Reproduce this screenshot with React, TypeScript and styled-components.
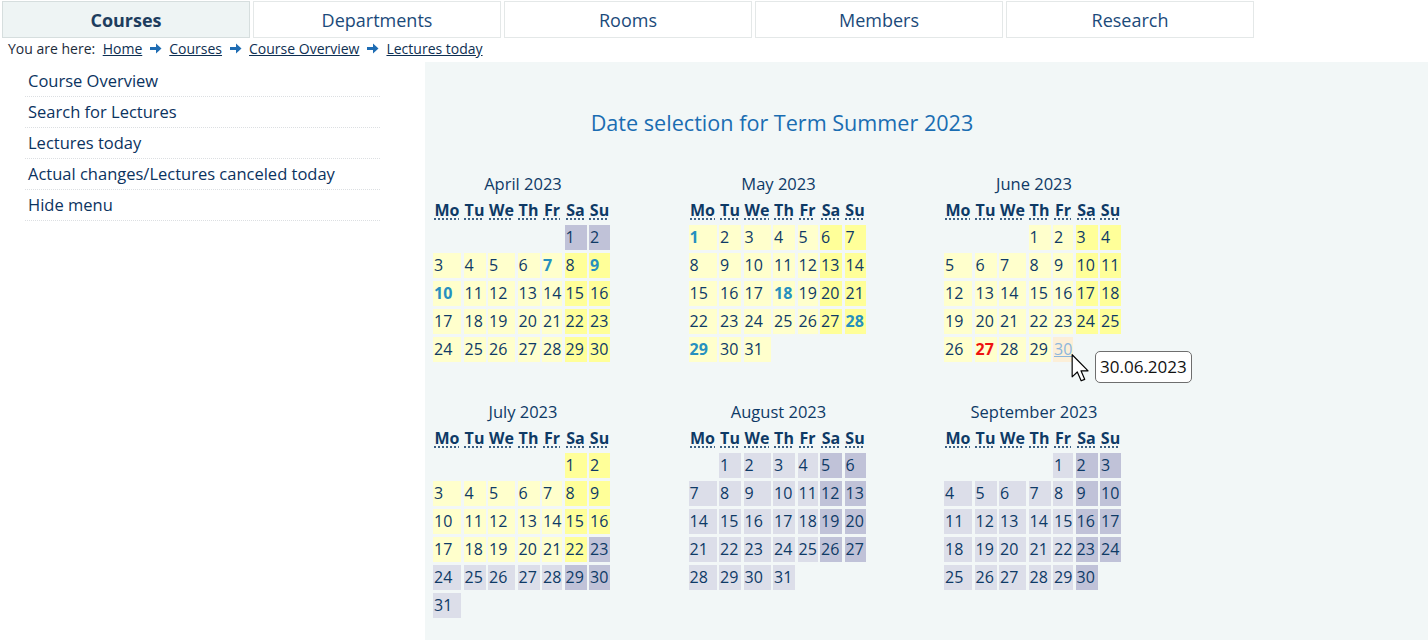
import React from 'react';
import styled, { createGlobalStyle, css } from 'styled-components';

const GlobalStyle = createGlobalStyle`
  html, body {
    margin: 0;
    padding: 0;
    background: #fff;
  }
  body {
    font-family: 'Open Sans', 'Noto Sans', sans-serif;
    color: #0e3a66;
  }
`;

// Top navigation
const Nav = styled.nav`
  display: flex;
  gap: 3px;
  padding: 1px 0 0 2px;
`;

const Tab = styled.a<{ $active?: boolean }>`
  box-sizing: border-box;
  width: 248px;
  height: 37px;
  display: flex;
  align-items: center;
  justify-content: center;
  border: 1px solid #e4e8e8;
  background: #fff;
  font-size: 18px;
  color: #1b4a7a;
  text-decoration: none;
  ${p => p.$active && css`
    background: #eef4f4;
    border-color: #d6dede;
    font-weight: 700;
    color: #1d3d5e;
  `}
`;

const Crumbs = styled.div`
  box-sizing: border-box;
  height: 24px;
  padding: 0 0 3px 8px;
  display: flex;
  align-items: center;
  gap: 7.5px;
  font-size: 14px;
  color: #1c2b3a;
`;

const CrumbLink = styled.a`
  color: #0e2f52;
  text-decoration: underline;
`;

const Arrow = () => (
  <svg width="12" height="11" viewBox="0 0 12 11">
    <path d="M0 4 H6 V0.5 L11.5 5.5 L6 10.5 V7 H0 Z" fill="#1e6cb3" />
  </svg>
);

// Body layout
const Body = styled.div`
  display: flex;
  min-height: calc(100vh - 62px);
`;

const Sidebar = styled.ul`
  width: 425px;
  flex-shrink: 0;
  margin: 0;
  padding: 4px 0 0 25px;
  box-sizing: border-box;
  list-style: none;
`;

const SideItem = styled.li`
  width: 352px;
  height: 30px;
  line-height: 30px;
  padding-left: 3px;
  box-sizing: content-box;
  border-bottom: 1px dotted #dcdfe2;
  font-size: 16.5px;
  color: #0b3360;
`;

const Main = styled.main`
  flex: 1;
  background: #f2f7f7;
  padding: 46px 0 16px 8px;
`;

const Wrapper = styled.div`
  width: 698px;
`;

const Title = styled.h1`
  margin: 0 0 34px;
  text-align: center;
  font-size: 21.6px;
  line-height: 30px;
  font-weight: 400;
  color: #1a6db2;
`;

const Months = styled.div`
  display: grid;
  grid-template-columns: repeat(3, 180px);
  column-gap: 75.5px;
  row-gap: 38px;
  align-items: start;
`;

const MonthBox = styled.section`
  display: flex;
  flex-direction: column;
`;

const MonthName = styled.div`
  text-align: center;
  font-size: 16.5px;
  line-height: 24px;
  height: 27px;
  color: #0e3a66;
`;

const DayGrid = styled.div`
  display: grid;
  grid-template-columns: 28px 22px 27px 22px 20px 22px 21px;
  column-gap: 2.5px;
  row-gap: 3px;
`;

const WeekHead = styled.abbr`
  height: 22px;
  line-height: 22px;
  text-align: center;
  font-size: 16px;
  font-weight: 700;
  color: #0e3a66;
  text-decoration: underline dotted;
  text-underline-offset: 3px;
  white-space: nowrap;
  margin-bottom: 1px;
`;

type Tone = 'lecture' | 'free';
type Mark = 'holiday' | 'today' | 'hover' | undefined;

const tones = {
  lecture: ['#ffffcc', '#ffff99'],
  free: ['#dcdee9', '#c0c2d8'],
};

const Day = styled.div<{ $tone: Tone; $weekend: boolean; $mark: Mark }>`
  position: relative;
  height: 25px;
  line-height: 25px;
  padding-left: 1px;
  font-size: 16px;
  white-space: nowrap;
  color: #0e3a66;
  background: ${p => tones[p.$tone][p.$weekend ? 1 : 0]};
  ${p => p.$mark === 'holiday' && css`
    color: #2690bf;
    font-weight: 700;
  `}
  ${p => p.$mark === 'today' && css`
    color: #ee1111;
    font-weight: 700;
  `}
  ${p => p.$mark === 'hover' && css`
    background: #fcefd8;
    color: #8cb6dc;
    text-decoration: underline;
  `}
`;

const Tooltip = styled.div`
  position: absolute;
  left: 42px;
  top: 14px;
  z-index: 3;
  padding: 0 4px;
  height: 30px;
  line-height: 30px;
  background: #fff;
  border: 1px solid #6e6e6e;
  border-radius: 5px;
  color: #111;
  font-size: 17px;
  font-weight: 400;
  text-decoration: none;
`;

const Cursor = styled.svg`
  position: absolute;
  left: 18px;
  top: 17px;
  z-index: 4;
`;

const months = [
  { name: 'April 2023', m: 4, offset: 5, days: 30 },
  { name: 'May 2023', m: 5, offset: 0, days: 31 },
  { name: 'June 2023', m: 6, offset: 3, days: 30 },
  { name: 'July 2023', m: 7, offset: 5, days: 31 },
  { name: 'August 2023', m: 8, offset: 1, days: 31 },
  { name: 'September 2023', m: 9, offset: 4, days: 30 },
];

const weekdays = [
  ['Mo', 'Monday'], ['Tu', 'Tuesday'], ['We', 'Wednesday'], ['Th', 'Thursday'],
  ['Fr', 'Friday'], ['Sa', 'Saturday'], ['Su', 'Sunday'],
];

const holidays = ['4-7', '4-9', '4-10', '5-1', '5-18', '5-28', '5-29'];

const inLectures = (m: number, d: number) => {
  const v = m * 100 + d;
  return v >= 403 && v <= 722;
};

const Month: React.FC<{ name: string; m: number; offset: number; days: number }> = ({ name, m, offset, days }) => (
  <MonthBox>
    <MonthName>{name}</MonthName>
    <DayGrid>
      {weekdays.map(([s, l]) => (
        <WeekHead key={s} title={l}>{s}</WeekHead>
      ))}
      {Array.from({ length: offset }).map((_, i) => <div key={'e' + i} />)}
      {Array.from({ length: days }).map((_, i) => {
        const d = i + 1;
        const col = (offset + i) % 7;
        const key = `${m}-${d}`;
        let mark: Mark;
        if (holidays.includes(key)) mark = 'holiday';
        if (key === '6-27') mark = 'today';
        if (key === '6-30') mark = 'hover';
        return (
          <Day key={d} $tone={inLectures(m, d) ? 'lecture' : 'free'} $weekend={col >= 5} $mark={mark}>
            {d}
            {mark === 'hover' && (
              <>
                <Cursor width="20" height="28" viewBox="0 0 13 19">
                  <path d="M0.5 0.5 L0.5 15.5 L4 12.2 L6.6 18.2 L9 17.2 L6.5 11.4 L11.3 11.4 Z" fill="#fff" stroke="#000" strokeWidth="0.8" strokeLinejoin="round" />
                </Cursor>
                <Tooltip>30.06.2023</Tooltip>
              </>
            )}
          </Day>
        );
      })}
    </DayGrid>
  </MonthBox>
);

const tabs = ['Courses', 'Departments', 'Rooms', 'Members', 'Research'];
const menu = ['Course Overview', 'Search for Lectures', 'Lectures today', 'Actual changes/Lectures canceled today', 'Hide menu'];
const trail = ['Home', 'Courses', 'Course Overview', 'Lectures today'];

const App: React.FC = () => (
  <>
    <GlobalStyle />
    <Nav>
      {tabs.map((t, i) => (
        <Tab key={t} $active={i === 0}>{t}</Tab>
      ))}
    </Nav>
    <Crumbs>
      <span>You are here:</span>
      {trail.map((t, i) => (
        <React.Fragment key={t}>
          {i > 0 && <Arrow />}
          <CrumbLink href="#">{t}</CrumbLink>
        </React.Fragment>
      ))}
    </Crumbs>
    <Body>
      <Sidebar>
        {menu.map(item => <SideItem key={item}>{item}</SideItem>)}
      </Sidebar>
      <Main>
        <Wrapper>
          <Title>Date selection for Term Summer 2023</Title>
          <Months>
            {months.map(mo => <Month key={mo.name} {...mo} />)}
          </Months>
        </Wrapper>
      </Main>
    </Body>
  </>
);

export default App;
